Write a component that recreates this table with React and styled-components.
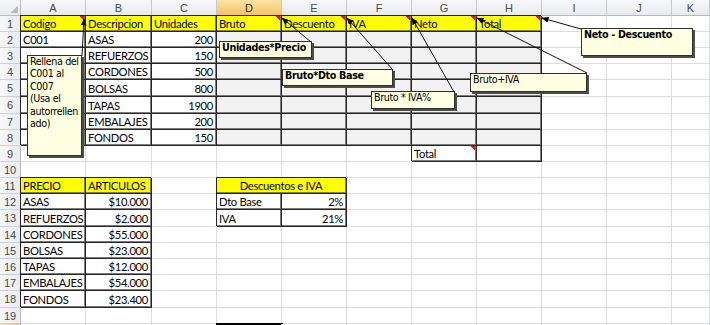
import React from "react";
import styled, { createGlobalStyle } from "styled-components";

const GlobalStyle = createGlobalStyle`
  html, body {
    margin: 0;
    padding: 0;
    background: #fff;
    overflow: hidden;
  }
  * {
    box-sizing: border-box;
  }
`;

const COLS = ["A", "B", "C", "D", "E", "F", "G", "H", "I", "J", "K"];
const COL_WIDTHS = [65, 66, 65, 65, 65, 65, 65, 65, 65, 65];
const ROW_HEIGHTS = [16, 16, 16, 16, 17, 17, 16, 16, 16, 16, 16, 16, 17, 16, 16, 16, 16, 17, 16, 16];

const GRID = "#dadcdd";
const LINE = "#262626";

// cell contents: t = text, y = yellow, g = grey, b = boxed, r = right, c = center, n = comment mark
const cells = {
  A1: { t: "Codigo", y: 1, b: 1, n: 1 },
  B1: { t: "Descripcion", y: 1, b: 1 },
  C1: { t: "Unidades", y: 1, b: 1 },
  D1: { t: "Bruto", y: 1, b: 1, n: 1 },
  E1: { t: "Descuento", y: 1, b: 1, n: 1 },
  F1: { t: "IVA", y: 1, b: 1, n: 1 },
  G1: { t: "Neto", y: 1, b: 1, n: 1 },
  H1: { t: "Total", y: 1, b: 1, n: 1 },
  G9: { t: "Total", b: 1, n: 1 },
  H9: { b: 1 },
  A11: { t: "PRECIO", y: 1, b: 1 },
  B11: { t: "ARTICULOS", y: 1, b: 1 },
  D11: { t: "Descuentos e IVA", y: 1, b: 1, c: 1, span: 2 },
  E11: { skip: 1 },
  D12: { t: "Dto Base", b: 1 },
  E12: { t: "2%", b: 1, r: 1 },
  D13: { t: "IVA", b: 1 },
  E13: { t: "21%", b: 1, r: 1 },
};

const products = ["ASAS", "REFUERZOS", "CORDONES", "BOLSAS", "TAPAS", "EMBALAJES", "FONDOS"];
const units = ["200", "150", "500", "800", "1900", "200", "150"];
const prices = ["$10.000", "$2.000", "$55.000", "$23.000", "$12.000", "$54.000", "$23.400"];

products.forEach((name, i) => {
  const row = i + 2;
  cells["A" + row] = { t: row === 2 ? "C001" : "", b: 1 };
  cells["B" + row] = { t: name, b: 1 };
  cells["C" + row] = { t: units[i], b: 1, r: 1 };
  ["D", "E", "F", "G", "H"].forEach((c) => {
    cells[c + row] = { g: 1, b: 1 };
  });
  cells["A" + (row + 10)] = { t: name, b: 1 };
  cells["B" + (row + 10)] = { t: prices[i], b: 1, r: 1 };
});

const notes = [
  { x: 27, y: 55, w: 55, h: 101, lines: ["Rellena del", "C001 al", "C007", "(Usa el", "autorrellen", "ado)"] },
  { x: 219, y: 41, w: 93, h: 17, bold: true, lines: ["Unidades*Precio"] },
  { x: 282, y: 69, w: 111, h: 17, bold: true, lines: ["Bruto*Dto Base"] },
  { x: 371, y: 91, w: 84, h: 18, lines: ["Bruto * IVA%"] },
  { x: 470, y: 73, w: 117, h: 19, lines: ["Bruto+IVA"] },
  { x: 581, y: 28, w: 112, h: 28, bold: true, lines: ["Neto - Descuento"] },
];

const arrows = [
  [82, 56, 84, 19],
  [311, 42, 282, 18],
  [393, 70, 347, 18],
  [454, 92, 412, 18],
  [587, 73, 477, 18],
  [581, 29, 542, 18],
];

const Sheet = styled.div`
  position: relative;
  width: 710px;
  height: 325px;
  overflow: hidden;
  display: grid;
  grid-template-columns: 21px ${COL_WIDTHS.map((w) => w + "px").join(" ")} 1fr;
  grid-template-rows: 16px ${ROW_HEIGHTS.map((h) => h + "px").join(" ")};
  font-family: "Liberation Sans", Arial, sans-serif;
  color: #000;
`;

const Corner = styled.div`
  border-right: 1px solid #b8bcc2;
  border-bottom: 1px solid #b8bcc2;
  background:
    linear-gradient(135deg, transparent 62%, #b9bdc3 62%) right 2px bottom 2px / 10px 10px no-repeat,
    linear-gradient(#f6f7f9, #e7e9ec);
`;

const ColHead = styled.div`
  display: flex;
  align-items: center;
  justify-content: center;
  font-size: 11px;
  color: ${(p) => (p.$active ? "#2a2a2a" : "#4a4a4a")};
  border-right: 1px solid #c6cacf;
  border-bottom: 1px solid #b4b9bf;
  background: ${(p) =>
    p.$active ? "linear-gradient(#fbe2a6, #f5c365)" : "linear-gradient(#f7f8fa, #e8eaed)"};
`;

const RowHead = styled.div`
  display: flex;
  align-items: center;
  justify-content: center;
  font-size: 11px;
  color: #4a4a4a;
  border-right: 1px solid #b4b9bf;
  border-bottom: 1px solid #cdd1d5;
  background: ${(p) =>
    p.$active ? "linear-gradient(90deg, #fbe2a6, #f5c365)" : "linear-gradient(90deg, #f7f8fa, #e9ebee)"};
`;

const Cell = styled.div`
  grid-column: span ${(p) => p.$span || 1};
  display: flex;
  align-items: flex-end;
  justify-content: ${(p) => (p.$align === "right" ? "flex-end" : p.$align === "center" ? "center" : "flex-start")};
  padding: 0 3px 1px 2px;
  font-family: Lato, "Liberation Sans", sans-serif;
  font-size: 11.2px;
  letter-spacing: -0.3px;
  line-height: 13px;
  white-space: nowrap;
  border-right: 1px solid ${(p) => (p.$box ? LINE : GRID)};
  border-bottom: 1px solid ${(p) => (p.$box ? LINE : GRID)};
  background: ${(p) =>
      p.$note
        ? "linear-gradient(225deg, #e0141e 3.6px, transparent 3.6px) right top / 6px 6px no-repeat,"
        : ""}
    ${(p) => (p.$fill === "yellow" ? "#ffff00" : p.$fill === "grey" ? "#f2f2f2" : "#fff")};
  box-shadow: ${(p) =>
    p.$active
      ? `0 0 0 1px #000, inset 0 0 0 1px #000`
      : p.$box
      ? `-1px -1px 0 ${LINE}, inset -1px -1px 0 #7c7c7c`
      : "none"};
`;

const Arrows = styled.svg`
  position: absolute;
  left: 0;
  top: 0;
  pointer-events: none;
`;

const Note = styled.div`
  position: absolute;
  left: ${(p) => p.$x}px;
  top: ${(p) => p.$y}px;
  width: ${(p) => p.$w}px;
  height: ${(p) => p.$h}px;
  padding: 0 0 0 2px;
  background: #ffffe1;
  border: 1px solid #2e2e2e;
  box-shadow: 2px 2px 0 #4d4d4d;
  font-family: "DejaVu Sans", Tahoma, sans-serif;
  font-size: 9.6px;
  line-height: 12.4px;
  font-weight: ${(p) => (p.$bold ? 700 : 400)};
  letter-spacing: ${(p) => (p.$bold ? "-0.35px" : "-0.4px")};
  color: #000;
  white-space: nowrap;
`;

const NoteLine = styled.div`
  height: 12.4px;
`;

function renderRow(row) {
  const last = row === ROW_HEIGHTS.length;
  const out = [
    <RowHead key={"h" + row} $active={last}>
      {last ? null : row}
    </RowHead>,
  ];
  COLS.forEach((col) => {
    const key = col + row;
    const c = cells[key] || {};
    if (c.skip) return;
    out.push(
      <Cell
        key={key}
        $span={c.span}
        $box={!!c.b}
        $note={!!c.n}
        $align={c.r ? "right" : c.c ? "center" : "left"}
        $fill={c.y ? "yellow" : c.g ? "grey" : "white"}
        $active={key === "D20"}
      >
        {c.t}
      </Cell>
    );
  });
  return out;
}

export default function App() {
  return (
    <>
      <GlobalStyle />
      <Sheet>
        <Corner />
        {COLS.map((c) => (
          <ColHead key={c} $active={c === "D"}>
            {c}
          </ColHead>
        ))}
        {ROW_HEIGHTS.map((_, i) => renderRow(i + 1))}

        <Arrows width="710" height="325" viewBox="0 0 710 325">
          <defs>
            <marker
              id="tip"
              markerWidth="7"
              markerHeight="6"
              refX="6.5"
              refY="3"
              orient="auto"
              markerUnits="userSpaceOnUse"
            >
              <path d="M0,0 L7,3 L0,6 z" fill="#000" />
            </marker>
          </defs>
          {arrows.map(([x1, y1, x2, y2], i) => (
            <line key={i} x1={x1} y1={y1} x2={x2} y2={y2} stroke="#111" strokeWidth="1" markerEnd="url(#tip)" />
          ))}
        </Arrows>

        {notes.map((n, i) => (
          <Note key={i} $x={n.x} $y={n.y} $w={n.w} $h={n.h} $bold={n.bold}>
            {n.lines.map((l) => (
              <NoteLine key={l}>{l}</NoteLine>
            ))}
          </Note>
        ))}
      </Sheet>
    </>
  );
}
